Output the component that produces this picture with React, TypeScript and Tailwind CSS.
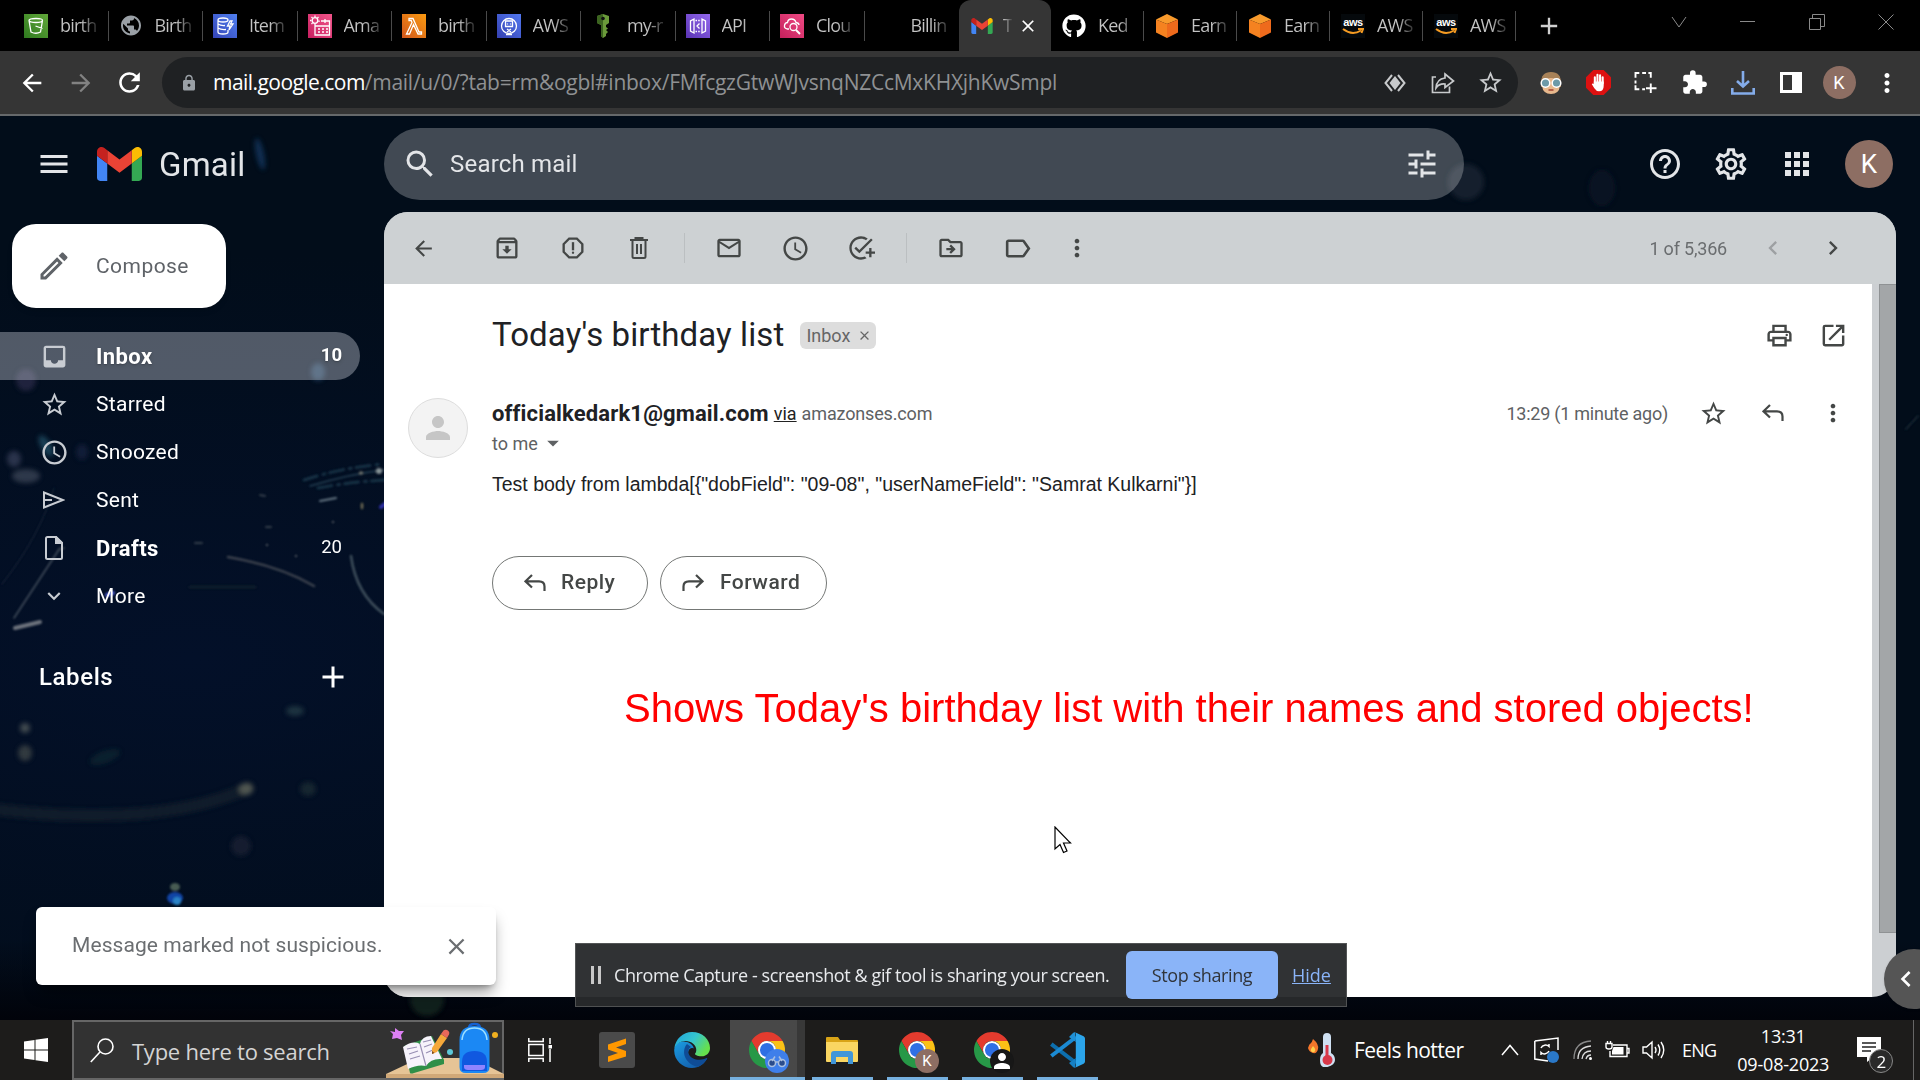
import React from "react";
import {
  MdMenu, MdSearch, MdTune, MdHelpOutline, MdOutlineSettings, MdApps, MdArrowBack, MdArrowForward, MdOutlineArchive,
  MdOutlineReport, MdMailOutline, MdSchedule, MdAddTask, MdOutlineDriveFileMove, MdLabelOutline,
  MdMoreVert, MdChevronLeft, MdChevronRight, MdOutlinePrint, MdOpenInNew, MdStarBorder, MdOutlineEdit, MdInbox,
  MdExpandMore, MdAdd, MdClose, MdPerson, MdExtension, MdLock, MdRefresh, MdPublic, MdArrowDropDown,
} from "react-icons/md";
import { FaGithub } from "react-icons/fa";

type Kids = { children?: React.ReactNode };

/* ---------- logos ---------- */

const GmailLogo = ({ className }: { className: string }) => (
  <svg viewBox="52 42 88 66" className={className}>
    <path fill="#4285f4" d="M58 108h14V74L52 59v43c0 3.32 2.69 6 6 6" />
    <path fill="#34a853" d="M120 108h14c3.32 0 6-2.69 6-6V59l-20 15" />
    <path fill="#fbbc04" d="M120 48v26l20-15v-8c0-7.42-8.47-11.65-14.4-7.2" />
    <path fill="#ea4335" d="M72 74V48l24 18 24-18v26L96 92" />
    <path fill="#c5221f" d="M52 51v8l20 15V48l-5.6-4.2c-5.94-4.45-14.4-.22-14.4 7.2" />
  </svg>
);

const ChromeLogo = () => (
  <svg viewBox="2 2 44 44" className="size-9">
    <path fill="#e33b2e" d="M4.95 13A22 22 0 0 1 43.05 13H24A11 11 0 0 0 14.47 29.5Z" />
    <path fill="#fbc116" d="M24 13H43.05A22 22 0 0 1 24 46L33.53 29.5A11 11 0 0 0 24 13Z" />
    <path fill="#279847" d="M24 46A22 22 0 0 1 4.95 13L14.47 29.5A11 11 0 0 0 33.53 29.5Z" />
    <circle cx="24" cy="24" r="11" fill="#fff" />
    <circle cx="24" cy="24" r="8.6" fill="#2f6fe4" />
  </svg>
);

const EdgeLogo = () => (
  <svg viewBox="0 0 36 36" className="size-9">
    <defs>
      <linearGradient id="eg" x1="0" y1="0" x2="1" y2=".5">
        <stop offset="0" stopColor="#1fa3dc" />
        <stop offset=".55" stopColor="#35c5cf" />
        <stop offset="1" stopColor="#66e04d" />
      </linearGradient>
      <linearGradient id="eb" x1="0" y1="0" x2=".8" y2="1">
        <stop offset="0" stopColor="#1b9de2" />
        <stop offset="1" stopColor="#1258a6" />
      </linearGradient>
    </defs>
    <path fill="url(#eb)" d="M.3 17C1.500 10 8 8.500 13 10C18 11.500 20 15 19.500 16.500C16 14.500 13 19 14.500 23C17 30 27 31 33 26.500C30 32 25 36 18 36C8 36-.8 27 .3 17Z" />
    <path fill="#0f4c96" d="M13 12C10 15 9 21 11.500 26C14 31 19 34 24 34.800C28 33.500 31.500 30 33.300 26.600C33.400 26 33 25.900 32.500 26.100C26 29.500 17 27.500 14.700 22C13.500 19 15 16 17 15Z" />
    <path fill="url(#eg)" d="M.3 16.500C1.300 7 9 0 18 0C28.500 0 36 7.500 36 16C36 21.500 31.500 24.500 27.500 24.300C23 24.200 20.800 22.800 21 21.800C21.200 21.200 22.300 20.600 22.300 18C22.300 13 17.500 9 11.500 9C6.500 9 2 12 .3 16.500Z" />
  </svg>
);

const VsCodeLogo = () => (
  <svg viewBox="0 0 36 36" className="size-9">
    <path fill="none" stroke="#0d6fae" strokeWidth="4" strokeLinejoin="round" d="M2.300 12.200L27 31" />
    <path fill="none" stroke="#1b8ad3" strokeWidth="4" strokeLinejoin="round" d="M2.300 24L27 5" />
    <path fill="#2ba4ea" d="M26 .3L34.600 4.200Q36 5 36 6.400V29.600Q36 31 34.600 31.800L26 35.800Q26.800 35 26.800 33.500V2.500Q26.800 1 26 .3Z" />
    <path fill="#1f90d6" d="M26 .3Q25 0 24 1L20 5L26.800 10Z" />
    <path fill="#1580c4" d="M26 35.800Q25 36 24 35L20 31L26.800 26Z" />
  </svg>
);

const AwsTile = ({ from, to, children }: { from: string; to: string } & Kids) => (
  <svg viewBox="0 0 24 24" className="size-6" fill="none" stroke="#fff" strokeWidth="1.3">
    <defs>
      <linearGradient id={"g" + from.slice(1)} x1="0" y1="1" x2="1" y2="0">
        <stop offset="0" stopColor={from} />
        <stop offset="1" stopColor={to} />
      </linearGradient>
    </defs>
    <rect width="24" height="24" fill={`url(#g${from.slice(1)})`} stroke="none" />
    {children}
  </svg>
);

const OrangeCube = () => (
  <svg viewBox="0 0 24 24" className="size-6">
    <path fill="#f89a2c" d="M12 0L23 5.500L12 10L1 5.500Z" />
    <path fill="#f58220" d="M1 5.500L12 10V24L1 18.500Z" />
    <path fill="#ee6a1c" d="M23 5.500L12 10V24L23 18.500Z" />
  </svg>
);

const AwsSmile = () => (
  <span className="flex size-6 flex-col items-center bg-[#05090c] pt-0.5 font-['Liberation_Sans',sans-serif] text-[11px] leading-[12px] font-bold tracking-[-0.5px] text-white">
    aws
    <svg viewBox="0 0 22 8" className="h-2 w-[22px]" fill="none" stroke="#f59b22" strokeWidth="2">
      <path d="M1 1Q10 8 19 2.500M16 1H21L19.500 5" />
    </svg>
  </span>
);

/* ---------- browser tabs ---------- */

const tabs: { label: string; icon: React.ReactNode }[] = [
  {
    label: "birth",
    icon: (
      <AwsTile from="#2f7a1f" to="#62a83a">
        <path d="M5 6.500L7 18Q12 20.500 16.500 18L18.500 6.500M5 6.500Q5 4.500 12 4.500T18.500 6.500T12 8.500T5 6.500M11.500 12L18.500 14.500" />
      </AwsTile>
    ),
  },
  { label: "Birth", icon: <MdPublic className="size-[25px] text-[#9aa0a6]" /> },
  {
    label: "Item",
    icon: (
      <AwsTile from="#3444b8" to="#5080f0">
        <path d="M5 6Q5 4 10 4T15 6T10 8T5 6V18Q5 20 10 20T15 18V16M5 10Q8 12 12 11.500M5 14Q8 16 13 15.500M17 7L14.500 12H17L16 16L20 10H17.500L19 7Z" />
      </AwsTile>
    ),
  },
  {
    label: "Ama",
    icon: (
      <AwsTile from="#c71f60" to="#f2558a">
        <path d="M7 10V21H21.500V7H13M7 12H21M11 6.500V8M17 5V9M10 15H12M14 15H16M18 15H20M10 18H12M14 18H16M18 18H20" />
        <circle cx="7" cy="6.500" r="2.800" />
        <path d="M7 1.500V3M2 6.500H3.500M3.500 3L4.500 4M10.500 3L9.500 4M3.500 10L4.500 9" />
      </AwsTile>
    ),
  },
  {
    label: "birth",
    icon: (
      <AwsTile from="#d0561c" to="#fa9a10">
        <path d="M7 4.500H11L17 18H19.500V20H16L11.500 10.500L7.500 20H4.500L10 8.500L9.200 6.500H7Z" />
      </AwsTile>
    ),
  },
  {
    label: "AWS",
    icon: (
      <AwsTile from="#3440b0" to="#5278f0">
        <circle cx="12" cy="12" r="7.500" />
        <path d="M8.500 7H15.500V12.500H8.500ZM10 15L14 18M14 15L10 18M10.500 9.500V10.500M13.500 9.500V10.500M9 20.500H15" />
      </AwsTile>
    ),
  },
  {
    label: "my-r",
    icon: (
      <svg viewBox="0 0 24 24" className="size-6">
        <path fill="#6a9a3a" d="M6 2L12 0L18 2V9L15 11V13L17 14.500L15 16L17 18L15 20V22L12 24L10 22V11L6 9Z" />
        <path fill="#3c6420" d="M6 2L12 0V24L10 22V11L6 9Z" />
        <circle cx="12" cy="4.500" r="1.800" fill="#111" />
      </svg>
    ),
  },
  {
    label: "API",
    icon: (
      <AwsTile from="#5a34b4" to="#9468ee">
        <path d="M8 5L4.500 7V17L8 19ZM16 5L19.500 7V17L16 19ZM13.500 9.500L11 12L13.500 14.500" />
        <path d="M9.500 6.500H15M9.500 17.500H15" strokeDasharray="1.500 1.200" />
      </AwsTile>
    ),
  },
  {
    label: "Clou",
    icon: (
      <AwsTile from="#c4205c" to="#f04a84">
        <path d="M9 15H7.500Q4 14.500 4.500 11.500T7.500 8.500Q8 5 11.500 5T16 8.500Q19 9 19 11" />
        <circle cx="13.500" cy="13" r="3.500" />
        <path d="M16 16L20 20" strokeWidth="2" />
      </AwsTile>
    ),
  },
  { label: "Billin", icon: null },
];

const tabsAfter: { label: string; icon: React.ReactNode }[] = [
  { label: "Ked", icon: <FaGithub className="size-6 text-white" /> },
  { label: "Earn", icon: <OrangeCube /> },
  { label: "Earn", icon: <OrangeCube /> },
  { label: "AWS", icon: <AwsSmile /> },
  { label: "AWS", icon: <AwsSmile /> },
];

const TabBody = ({ label, icon }: { label: string; icon: React.ReactNode }) => (
  <>
    <span className="flex size-6 shrink-0 items-center justify-center">{icon}</span>
    <span className="ml-3 w-[38px] bg-linear-to-r from-[#c4c4c4] from-55% to-[#222] bg-clip-text text-[18px] tracking-[-0.8px] whitespace-nowrap text-transparent">
      {label}
    </span>
  </>
);

const Cell = ({ children, className }: Kids & { className: string }) => (
  <span className={"flex shrink-0 items-center justify-center " + className}>{children}</span>
);

const TabStrip = () => (
  <div className="flex h-[51px] bg-black pl-[14px]">
    {tabs.map((t, i) => (
      <div key={i} className="flex h-[51px] w-[94.500px] items-center pl-[10px]">
        <TabBody {...t} />
        {i < 9 && <span className="ml-auto h-[30px] w-px bg-[#4a4a4a]" />}
      </div>
    ))}
    <div className="relative flex h-[51px] w-[92px] items-center rounded-t-xl bg-[#353535] pl-3">
      <span className="absolute bottom-0 -left-2 size-2 bg-radial-[at_0_0] from-black from-95% to-[#353535] to-100%" />
      <span className="absolute -right-2 bottom-0 size-2 bg-radial-[at_100%_0] from-black from-95% to-[#353535] to-100%" />
      <GmailLogo className="h-4 w-[22px]" />
      <span className="ml-[10px] w-[9px] bg-linear-to-r from-[#ccc] to-[#444] bg-clip-text text-[18px] tracking-[-1px] text-transparent">T</span>
      <MdClose className="ml-[6px] size-5 text-white" />
    </div>
    {tabsAfter.map((t, i) => (
      <div key={i} className="flex h-[51px] w-[93px] items-center pl-[11px]">
        <TabBody {...t} />
        <span className="ml-auto h-[30px] w-px bg-[#4a4a4a]" />
      </div>
    ))}
    <Cell className="ml-[15px] w-[36px]"><MdAdd className="size-7 text-[#d0d0d0]" /></Cell>
    <div className="ml-auto flex h-[43px] w-[275px] items-center">
      <Cell className="w-[68px]"><svg viewBox="0 0 16 12" className="h-3 w-4" fill="none" stroke="#8a8a8a"><path d="M1 1L8 11L15 1" /></svg></Cell>
      <Cell className="w-[69px]"><span className="h-px w-[15px] bg-[#8a8a8a]" /></Cell>
      <Cell className="w-[69px]"><svg viewBox="0 0 16 16" className="size-4" fill="none" stroke="#8a8a8a"><path d="M.5 4.500H11.500V15.500H.5ZM3.500 4V.5H15.500V12.500H12" /></svg></Cell>
      <Cell className="w-[69px]"><svg viewBox="0 0 16 16" className="size-4" fill="none" stroke="#8a8a8a"><path d="M.5.5L15.500 15.500M15.500.5L.5 15.500" /></svg></Cell>
    </div>
  </div>
);

const AddressBar = () => (
  <div className="flex h-[65px] items-center border-b-2 border-[#66696b] bg-[#353535] text-white">
    <Cell className="ml-[8px] w-12"><MdArrowBack className="size-7" /></Cell>
    <Cell className="w-[49px]"><MdArrowForward className="size-7 text-[#828282]" /></Cell>
    <Cell className="w-12"><MdRefresh className="size-[31px]" /></Cell>
    <div className="ml-[9px] flex h-[51px] w-[1356px] items-center rounded-full bg-[#1f2123] pl-[18px]">
      <MdLock className="size-[18px] text-[#9aa0a6]" />
      <span className="ml-[15px] text-[21px] tracking-[-0.26px] whitespace-nowrap text-[#8f9193]">
        <span className="tracking-[-0.55px] text-white">mail.google.com</span>/mail/u/0/?tab=rm&amp;ogbl#inbox/FMfcgzGtwWJvsnqNZCcMxKHXjhKwSmpl
      </span>
      <Cell className="ml-auto w-12">
        <svg viewBox="0 0 22 18" className="h-[18px] w-[22px]" fill="none" stroke="#c8cacc" strokeWidth="2">
          <path d="M8 1L1.500 9L8 17M14 1L20.500 9L14 17" />
          <path d="M11 2L16.500 9L11 16L5.500 9Z" fill="#c8cacc" stroke="none" />
        </svg>
      </Cell>
      <Cell className="w-12">
        <svg viewBox="0 0 24 22" className="h-[22px] w-6" fill="none" stroke="#c8cacc" strokeWidth="1.700">
          <path d="M5 5H1.500V20.500H18.500V14.500M14 2L22.500 9L14 15.500V12Q8 11.500 5 16Q5.500 7 14 6Z" />
        </svg>
      </Cell>
      <Cell className="mr-[4px] w-[47px]"><MdStarBorder className="size-[27px] text-[#c8cacc]" /></Cell>
    </div>
    <div className="ml-[9px] flex">
      <Cell className="w-12">
        <svg viewBox="0 0 24 24" className="size-6">
          <path fill="#a88258" d="M2 12Q2 1 12 1T22 12V16H2Z" />
          <path fill="#e8b88c" d="M3 11Q12 3 21 11V15Q20 23 12 23T3 15Z" />
          <circle cx="6.500" cy="12" r="4.300" fill="#6d9aa8" stroke="#fff" strokeWidth="1.500" />
          <circle cx="17.500" cy="12" r="4.300" fill="#6d9aa8" stroke="#fff" strokeWidth="1.500" />
          <path d="M9.500 19H14.500" stroke="#a04030" strokeWidth="1.500" />
        </svg>
      </Cell>
      <Cell className="w-[47px]">
        <svg viewBox="0 0 24 24" className="size-[25px]">
          <path fill="#dd1111" d="M7 0H17L24 7V17L17 24H7L0 17V7Z" />
          <path stroke="#fff" strokeWidth="2" strokeLinecap="round" d="M8.500 14V7M11 12V4.500M13.500 12V5M16 13V7" />
          <path fill="#fff" d="M7.500 11H17V15Q17 20.500 12.500 20.500Q10 20.500 8 17.500L5.500 13.500Q6.500 12.500 7.500 13.500Z" />
        </svg>
      </Cell>
      <Cell className="w-12">
        <svg viewBox="0 0 24 22" className="h-[21px] w-6" fill="none" stroke="#fff" strokeWidth="2">
          <path d="M1 6V1H5M8 1H12M14.500 1H17V6M1 9V12M1 14V18H5M8 18H11M17 12V22M12 17H23" />
        </svg>
      </Cell>
      <Cell className="w-[49px]"><MdExtension className="size-[27px]" /></Cell>
      <Cell className="w-12">
        <svg viewBox="0 0 24 24" className="size-6" fill="none" stroke="#84acea" strokeWidth="2.600">
          <path d="M12 0V15M6 10L12 15.500L18 10M1.300 17V22.500H22.700V17" />
        </svg>
      </Cell>
      <Cell className="w-12">
        <span className="flex h-[21px] w-[22px] border-[3px] border-white"><span className="ml-auto w-[7px] bg-white" /></span>
      </Cell>
      <Cell className="w-12"><span className="flex size-[33px] items-center justify-center rounded-full bg-[#8d6e63] font-[Roboto,sans-serif] text-[18px]">K</span></Cell>
      <Cell className="w-12"><MdMoreVert className="size-[30px]" /></Cell>
    </div>
  </div>
);

/* ---------- wallpaper ---------- */

const Wallpaper = () => (
  <svg viewBox="0 0 1920 904" className="absolute inset-0 h-[904px] w-[1920px]" fill="none" strokeLinecap="round">
    <defs>
      <filter id="b1"><feGaussianBlur stdDeviation="1" /></filter>
      <filter id="b3" x="-50%" y="-50%" width="200%" height="200%"><feGaussianBlur stdDeviation="2.500" /></filter>
      <radialGradient id="wg" cx="10%" cy="60%" r="45%">
        <stop offset="0" stopColor="#031029" />
        <stop offset="1" stopColor="#020d1a" />
      </radialGradient>
      <linearGradient id="wb" x1="0" y1="0" x2="0" y2="1">
        <stop offset="0" stopColor="#01040c" stopOpacity="0" />
        <stop offset="1" stopColor="#01030a" />
      </linearGradient>
    </defs>
    <rect width="1920" height="904" fill="url(#wg)" />
    <rect y="824" width="1920" height="80" fill="url(#wb)" />
    <g filter="url(#b3)" opacity=".75">
      <ellipse cx="260" cy="38" rx="4" ry="16" fill="#123a66" transform="rotate(-12 260 38)" />
      <ellipse cx="26" cy="264" rx="10" ry="11" fill="#2c2a48" />
      <ellipse cx="318" cy="256" rx="7" ry="9" fill="#28486a" />
      <ellipse cx="14" cy="343" rx="7" ry="8" fill="#39405a" />
      <ellipse cx="46" cy="330" rx="5" ry="12" fill="#24536a" transform="rotate(-30 46 330)" />
      <ellipse cx="82" cy="336" rx="6" ry="8" fill="#17233f" />
      <ellipse cx="26" cy="360" rx="14" ry="7" fill="#3c4658" />
      <ellipse cx="25" cy="612" rx="5" ry="5" fill="#5a6260" />
      <ellipse cx="25" cy="637" rx="7" ry="8" fill="#424848" />
      <ellipse cx="295" cy="595" rx="9" ry="5" fill="#284048" />
      <ellipse cx="241" cy="730" rx="10" ry="10" fill="#1c2434" />
      <ellipse cx="308" cy="673" rx="8" ry="7" fill="#1e2e36" />
      <ellipse cx="105" cy="641" rx="16" ry="6" fill="#0e2830" transform="rotate(-20 105 641)" />
      <path d="M0 694Q160 712 248 672" stroke="#16242e" strokeWidth="12" />
      <ellipse cx="246" cy="673" rx="7" ry="6" fill="#6a6e60" />
      <ellipse cx="1466" cy="66" rx="18" ry="18" fill="#1c2636" />
      <ellipse cx="1602" cy="72" rx="13" ry="18" fill="#0c1628" />
      <ellipse cx="427" cy="884" rx="17" ry="16" fill="#182a22" />
    </g>
    <g filter="url(#b1)" opacity=".8">
      <path d="M14 502L60 432" stroke="#56606c" strokeWidth="1.500" />
      <path d="M2 468Q40 420 54 372" stroke="#162438" strokeWidth="1.300" />
      <path d="M15 512L40 506" stroke="#8a8e94" strokeWidth="4" />
      <path d="M228 441Q280 450 314 470" stroke="#4c5058" strokeWidth="2.500" />
      <path d="M351 440Q356 478 384 498" stroke="#50606a" strokeWidth="2.500" />
      <path d="M190 471H255" stroke="#12202f" strokeWidth="3" />
      <path d="M304 364Q340 352 383 348M318 372Q350 366 384 364" stroke="#1d3a4e" strokeWidth="3" strokeDasharray="14 6 2 5" />
      <path d="M310 370Q350 358 384 354" stroke="#2c4c60" strokeWidth="1.500" />
      <path d="M320 385L336 382" stroke="#8294a0" strokeWidth="2" />
      <circle cx="379" cy="355" r="3" fill="#a8b4b4" />
      <circle cx="361" cy="357" r="1.800" fill="#9a9a8a" />
      <path d="M362 388V392" stroke="#8a8260" strokeWidth="2.500" />
      <path d="M381 391L386 387" stroke="#3a38c8" strokeWidth="4" />
      <path d="M107 479L113 477" stroke="#5a6af0" strokeWidth="4" />
      <path d="M260 379L265 380M266 411H271M195 427H202M58 434L64 432" stroke="#404a54" strokeWidth="2" />
      <circle cx="333" cy="406" r="1" fill="#888" /><circle cx="267" cy="429" r="1" fill="#888" /><circle cx="296" cy="440" r="1" fill="#888" />
      <ellipse cx="175" cy="771" rx="5" ry="4" fill="#5a7060" />
      <ellipse cx="175" cy="782" rx="8" ry="6" fill="#1552c8" />
      <ellipse cx="177" cy="785" rx="4" ry="4" fill="#35a0f0" />
      <path d="M1906 313L1918 300" stroke="#1a2c36" strokeWidth="2" />
    </g>
  </svg>
);

/* ---------- gmail ---------- */

const GmailHeader = () => (
  <div className="relative flex h-[96px] items-center text-[#e3e5e8]">
    <div className="flex w-[384px] items-center pl-[36px]">
      <MdMenu className="size-9" />
      <GmailLogo className="ml-[25px] h-[34px] w-[45px]" />
      <span className="mt-px ml-[17px] text-[33px] tracking-[0.2px]">Gmail</span>
    </div>
    <div className="flex h-[72px] w-[1080px] items-center rounded-full bg-white/25 pr-[24px] pl-[18px]">
      <MdSearch className="size-9" />
      <span className="ml-[12px] text-[24px] tracking-[0.2px]">Search mail</span>
      <MdTune className="ml-auto size-9" />
    </div>
    <div className="ml-[168px] flex items-center">
      <Cell className="w-[66px]"><MdHelpOutline className="size-9" /></Cell>
      <Cell className="w-[66px]"><MdOutlineSettings className="size-[38px]" /></Cell>
      <Cell className="w-[66px]"><MdApps className="size-9" /></Cell>
      <span className="ml-[15px] flex size-12 items-center justify-center rounded-full bg-[#8d6e63] text-[26px] text-white">K</span>
    </div>
  </div>
);

const navItems = [
  { label: "Inbox", count: "10", bold: true, active: true, icon: <MdInbox className="size-[29px]" /> },
  { label: "Starred", icon: <MdStarBorder className="size-[29px]" /> },
  { label: "Snoozed", icon: <MdSchedule className="size-[29px]" /> },
  {
    label: "Sent",
    icon: (
      <svg viewBox="0 0 22 18" className="h-[18px] w-[22px]" fill="none" stroke="currentColor" strokeWidth="2">
        <path d="M1 1.500L20 9L1 16.500ZM1 9H9" />
      </svg>
    ),
  },
  {
    label: "Drafts", count: "20", bold: true,
    icon: (
      <svg viewBox="0 0 18 24" className="h-6 w-[18px]" fill="none" stroke="currentColor" strokeWidth="2">
        <path d="M1 2.500Q1 1 2.500 1H11L17 7V21.500Q17 23 15.500 23H2.500Q1 23 1 21.500Z" />
        <path d="M11 1V7H17Z" fill="currentColor" />
      </svg>
    ),
  },
  { label: "More", icon: <MdExpandMore className="size-[26px]" /> },
];

const Sidebar = () => (
  <div className="relative w-[384px] pt-3 text-white">
    <div className="ml-3 flex h-[84px] w-[214px] items-center rounded-3xl bg-white pl-[24px] text-[#5f6368] shadow-md">
      <MdOutlineEdit className="size-9" />
      <span className="mt-px ml-[24px] text-[21px] tracking-[0.45px]">Compose</span>
    </div>
    <div className="mt-6">
      {navItems.map((n) => (
        <div key={n.label} className={"flex h-12 w-[360px] items-center pr-[18px] pl-[36px] text-[21px] " + (n.active ? "rounded-r-full bg-[#c8ccd8]/40 text-shadow-md" : "")}>
          <Cell className="w-9 text-[#c8ccd2]">{n.icon}</Cell>
          <span className={"mt-px ml-[24px] " + (n.bold ? "text-[22px] font-bold tracking-[0.4px]" : "tracking-[0.3px]")}>{n.label}</span>
          <span className={"ml-auto text-[18.500px] " + (n.active ? "font-bold" : "")}>{n.count}</span>
        </div>
      ))}
    </div>
    <div className="mt-[33px] flex h-12 w-[351px] items-center justify-between pl-[39px] text-[24px] font-medium tracking-[0.6px]">
      Labels
      <MdAdd className="size-9 font-normal" />
    </div>
  </div>
);

const TrashIcon = () => (
  <svg viewBox="0 0 20 22" className="h-[22px] w-5" fill="none" stroke="currentColor" strokeWidth="2">
    <path d="M1 3H19M6.500 2V1H13.500V2M3.500 3V19.500Q3.500 21 5 21H15Q16.500 21 16.500 19.500V3M8 7V17M12 7V17" />
  </svg>
);

const MailToolbar = () => (
  <div className="flex h-[72px] items-center bg-[#cdd1d3] text-[#444746]">
    <Cell className="ml-[15px] w-12"><MdArrowBack className="size-[25px]" /></Cell>
    <Cell className="ml-[27px] w-[66px]"><MdOutlineArchive className="size-7" /></Cell>
    <Cell className="w-[66px]"><MdOutlineReport className="size-7" /></Cell>
    <Cell className="w-[66px]"><TrashIcon /></Cell>
    <Cell className="w-[24px]"><span className="h-[30px] w-px bg-[#bbbfc1]" /></Cell>
    <Cell className="w-[66px]"><MdMailOutline className="size-7" /></Cell>
    <Cell className="w-[66px]"><MdSchedule className="size-[29px]" /></Cell>
    <Cell className="w-[66px]"><MdAddTask className="size-7" /></Cell>
    <Cell className="w-[24px]"><span className="h-[30px] w-px bg-[#bbbfc1]" /></Cell>
    <Cell className="w-[66px]"><MdOutlineDriveFileMove className="size-7" /></Cell>
    <Cell className="w-[66px]"><MdLabelOutline className="size-[31px]" /></Cell>
    <Cell className="w-[54px]"><MdMoreVert className="size-7" /></Cell>
    <span className="mr-[16px] ml-auto text-[18px] tracking-[-0.2px] whitespace-nowrap text-[#6a6d6f]">1 of 5,366</span>
    <Cell className="w-[60px] text-[#9da0a2]"><MdChevronLeft className="size-7" /></Cell>
    <Cell className="mr-[33px] w-[60px]"><MdChevronRight className="size-7" /></Cell>
  </div>
);

const ReplyArrow = ({ flip }: { flip?: boolean }) => (
  <svg viewBox="0 0 22 18" className={"h-[18px] w-[22px] " + (flip ? "-scale-x-100" : "")} fill="none" stroke="#444746" strokeWidth="2.200">
    <path d="M8 1L1.500 7.300L8 13.500M1.500 7.300H15Q20.500 7.300 20.500 12.500V17" />
  </svg>
);

const Message = () => (
  <div className="h-[713px] w-[1488px] bg-white text-[#202124]">
    <div className="flex h-[102px] items-center pl-[108px]">
      <span className="text-[33px] tracking-[0.1px] whitespace-nowrap">Today's birthday list</span>
      <span className="ml-[16px] flex h-[27px] w-[76px] items-center rounded-md bg-[#dddddd] pl-[6px] text-[18px] text-[#666]">
        Inbox
        <MdClose className="ml-[7px] size-[15px]" />
      </span>
      <Cell className="mr-[12px] ml-auto w-[42px]"><MdOutlinePrint className="size-[29px] text-[#444746]" /></Cell>
      <Cell className="mr-[18px] w-[42px]"><MdOpenInNew className="size-[29px] text-[#444746]" /></Cell>
    </div>
    <div className="flex pt-3">
      <span className="ml-6 flex size-[60px] items-center justify-center rounded-full border border-[#ddd] bg-[#f3f3f3]">
        <MdPerson className="size-9 text-[#c6c6c6]" />
      </span>
      <div className="ml-6 flex-1">
        <div className="flex h-[30px] items-center text-[18px] whitespace-nowrap text-[#5e6163]">
          <span className="text-[22px] font-bold tracking-[0.15px] text-[#202124]">officialkedark1@gmail.com</span>
          <span className="ml-[5px] text-[#222] underline">via</span>
          <span className="ml-[5px] tracking-[-0.15px]">amazonses.com</span>
          <span className="mr-[15px] ml-auto tracking-[-0.24px]">13:29 (1 minute ago)</span>
          <Cell className="w-[60px]"><MdStarBorder className="size-[29px] text-[#444746]" /></Cell>
          <Cell className="w-[60px]"><ReplyArrow /></Cell>
          <Cell className="mr-[9px] w-[60px]"><MdMoreVert className="size-7 text-[#444746]" /></Cell>
        </div>
        <div className="flex h-[30px] items-center text-[18px] text-[#5e6163]">
          to me
          <MdArrowDropDown className="ml-px size-7" />
        </div>
        <div className="mt-[11px] h-[30px] font-['Liberation_Sans',sans-serif] text-[19.500px] leading-[30px] whitespace-nowrap">
          {'Test body from lambda[{"dobField": "09-08", "userNameField": "Samrat Kulkarni"}]'}
        </div>
        <div className="mt-[57px] flex gap-3 text-[21px] font-medium tracking-[0.5px] text-[#444746]">
          <span className="flex h-[54px] w-[156px] items-center rounded-full border border-[#747775] pl-[31px]"><ReplyArrow /><span className="ml-[15px]">Reply</span></span>
          <span className="flex h-[54px] w-[167px] items-center rounded-full border border-[#747775] pl-[21px]"><ReplyArrow flip /><span className="ml-4">Forward</span></span>
        </div>
        <div className="mt-[74px] ml-[132px] font-['Liberation_Sans',sans-serif] text-[40px] leading-[48px] whitespace-nowrap text-[#ff0000]">
          Shows Today's birthday list with their names and stored objects!
        </div>
      </div>
    </div>
  </div>
);

const Gmail = () => (
  <div className="relative h-[904px] overflow-hidden font-[Roboto,sans-serif]">
    <Wallpaper />
    <GmailHeader />
    <div className="flex">
      <Sidebar />
      <div className="relative h-[785px] w-[1512px] overflow-hidden rounded-3xl bg-[#cccfd2]">
        <MailToolbar />
        <div className="flex justify-between">
          <Message />
          <span className="h-[649px] w-[17px] border-y border-l border-[#8f9294] bg-[#a3a6a8]" />
        </div>
      </div>
    </div>
    <div className="absolute top-[791px] left-[36px] flex h-[78px] w-[460px] items-center justify-between rounded-md bg-white pr-[26px] pl-[36px] text-[21px] tracking-[0.08px] text-[#6b6e71] shadow-lg shadow-black/40">
      Message marked not suspicious.
      <MdClose className="size-[27px]" />
    </div>
    <span className="absolute top-[833px] left-[1884px] flex size-[60px] items-center rounded-full bg-[#555] pl-[6px] text-white shadow">
      <MdChevronLeft className="size-8" />
    </span>
  </div>
);

const SharingBar = () => (
  <div className="absolute top-[943px] left-[575px] flex h-[64px] w-[772px] items-center border border-[#6a6c6e]/60 bg-[#282a2c]/96 pl-[15px] text-[18px] whitespace-nowrap text-[#e8eaed]">
    <span className="h-[18px] w-[10px] border-x-[3px] border-[#c8c8c8]" />
    <span className="ml-[13px] w-[512px] tracking-[-0.4px]">Chrome Capture - screenshot &amp; gif tool is sharing your screen.</span>
    <span className="flex h-12 w-[152px] items-center justify-center rounded-md bg-[#8ab4f8] font-medium tracking-[-0.4px] text-[#30343a]">Stop sharing</span>
    <span className="ml-[14px] text-[#8ab4f8] underline">Hide</span>
  </div>
);

/* ---------- taskbar ---------- */

const SearchArt = () => (
  <svg viewBox="0 0 118 56" className="h-[56px] w-[118px]">
    <path fill="#e6c496" d="M0 52L34 36H86L118 52V56H0Z" />
    <path fill="#d0a878" d="M0 52H118V56H0Z" />
    <path fill="#dd80f4" d="M9 6L13 9L18 9L15 13L16 18L11 16L6 17L7 12L4 9L9 10Z" />
    <path fill="#2f8f48" d="M18 24L24 51Q25 52 28 51L58 42V38L46 14Z" />
    <path fill="#f6f3fb" d="M17 25Q27 18 34 22Q36 14 45 14L56 37Q45 36 40 44Q32 42 22 47Z" />
    <path stroke="#9890b4" strokeWidth="1.200" fill="none" d="M34 22L40 44M21 27L31 25M23 32L32 29M24 37L34 34M37 20L45 18M38 25L46 22M40 31L49 27" />
    <path fill="#f5a83a" d="M46 26L55 12L61 16L51 30L46 32Z" />
    <path fill="#7a4a20" d="M46 29V32L48.500 31Z" />
    <path fill="#e9685a" d="M55 12L57.500 8.500Q60 7 62.500 9Q64 10.500 63 12.500L61 16Z" />
    <circle cx="64" cy="30" r="3" fill="#5cc8d8" />
    <circle cx="109" cy="13" r="3" fill="#f0b020" />
    <path fill="none" stroke="#1560d0" strokeWidth="2.500" d="M83 6Q83 2 88.500 2T94 6" />
    <path fill="#1b88f4" d="M73.500 18Q73.500 4 88.500 4T103.500 18V45Q103.500 51 97 51H80Q73.500 51 73.500 45Z" />
    <path fill="none" stroke="#9fe0ff" strokeWidth="1.500" d="M76 18Q77 6 88.500 6T101 18" />
    <path fill="#1058e0" d="M76 40Q76 29 88.500 29T101 40V49H76Z" />
    <path fill="#8f84ff" d="M78 43H99V45Q99 48 95 48H82Q78 48 78 45Z" />
  </svg>
);

const AppSlot = ({ children, badge, active, plain }: Kids & { badge?: React.ReactNode; active?: boolean; plain?: boolean }) => (
  <div className={"relative flex h-[60px] w-[75px] items-center justify-center pr-[2px] " + (active ? "bg-linear-to-r from-[#484848] from-90% to-[#383838] to-90%" : "")}>
    {children}
    {badge && <span className="absolute top-[29px] left-[35px]">{badge}</span>}
    {!plain && <span className={"absolute bottom-0 h-[3px] bg-[#76b0df] " + (active ? "inset-x-0" : "inset-x-[7px]")} />}
  </div>
);

const Taskbar = () => (
  <div className="flex h-[60px] items-center bg-[#1d1c1b] text-white">
    <Cell className="w-[72px]">
      <svg viewBox="0 0 24 24" className="size-6" fill="#fff">
        <path d="M0 3.500L10.500 2V11.500H0ZM11.500 1.800L24 0V11.500H11.500ZM0 12.500H10.500V22L0 20.500ZM11.500 12.500H24V24L11.500 22.200Z" />
      </svg>
    </Cell>
    <div className="flex h-[60px] w-[432px] items-center border-2 border-[#666] bg-[#323232] pl-[16px]">
      <svg viewBox="0 0 24 25" className="h-[25px] w-6" fill="none" stroke="#fff" strokeWidth="1.600">
        <circle cx="15.500" cy="8.500" r="7.500" />
        <path d="M10 14L.8 24" />
      </svg>
      <span className="mt-0.5 ml-[18px] text-[22px] tracking-[-0.25px] text-[#d4d4d4]">Type here to search</span>
      <span className="-mr-0.5 ml-auto"><SearchArt /></span>
    </div>
    <Cell className="w-[72px]">
      <svg viewBox="0 0 24 24" className="size-6" fill="none" stroke="#fff" strokeWidth="1.500">
        <path d="M.8 0V3.500H15.200V0M.8 24V20.500H15.200V24M.8 6.500H15.200V17.500H.8ZM22 0V6M22 11V24" />
        <path d="M20.500 7H24V10.500H20.500Z" fill="#fff" stroke="none" />
      </svg>
    </Cell>
    <div className="ml-[4px] flex">
      <AppSlot plain>
        <svg viewBox="0 0 36 36" className="size-9">
          <rect width="36" height="36" rx="3" fill="#4a4a4a" />
          <path fill="#ff9800" d="M9 12.500L27 6.500V12L17 15.500L27 19V24.500L9 30V24.500L19 21L9 17.500Z" />
        </svg>
      </AppSlot>
      <AppSlot plain><EdgeLogo /></AppSlot>
      <AppSlot
        active
        badge={
          <svg viewBox="0 0 24 24" className="size-6">
            <circle cx="12" cy="12" r="12" fill="#3f7fea" />
            <circle cx="7" cy="14" r="3.500" fill="#2a4c8c" stroke="#a9bfe0" strokeWidth="1.500" /><circle cx="17" cy="14" r="3.500" fill="#2a4c8c" stroke="#a9bfe0" strokeWidth="1.500" />
            <path d="M7 12L10 7.500M14 7.500L17 12M10.500 13H13.500" stroke="#a9bfe0" strokeWidth="1.500" fill="none" />
          </svg>
        }
      >
        <ChromeLogo />
      </AppSlot>
      <AppSlot>
        <svg viewBox="0 0 32 27" className="h-[27px] w-8">
          <path fill="#d9a417" d="M0 1Q0 0 1 0H12L14 3H31Q32 3 32 4V10H0Z" />
          <path fill="#fad662" d="M0 5H32V24Q32 25 31 25H1Q0 25 0 24Z" />
          <path fill="#4196d8" d="M5 27V17Q5 14 8 14H24Q27 14 27 17V27H22V20H10V27Z" />
        </svg>
      </AppSlot>
      <AppSlot badge={<span className="flex size-6 items-center justify-center rounded-full bg-[#8d6e63] font-[Roboto,sans-serif] text-[15px]">K</span>}><ChromeLogo /></AppSlot>
      <AppSlot badge={<span className="flex size-6 items-center justify-center rounded-full bg-[#171717]"><MdPerson className="size-6" /></span>}><ChromeLogo /></AppSlot>
      <AppSlot><VsCodeLogo /></AppSlot>
    </div>
    <div className="ml-auto flex h-[60px] w-[612px] items-center">
      <svg viewBox="0 0 28 34" className="h-[34px] w-7">
        <path fill="#f5762a" d="M5 6Q11 11 10 16T5 20T0 15Q1 11 3 10Q4 9 5 6Z" />
        <path fill="#ffd04a" d="M5 13Q8 16 7 18T4 19T3 16Z" />
        <path fill="#cfe0f2" d="M15 4Q15 0 19 0T23 4V20Q27 22 27 27T19.500 34T12 27Q12 22 15 20Z" />
        <path stroke="#d8384a" strokeWidth="3" d="M19 12V26" />
        <circle cx="19.500" cy="27" r="5" fill="#d8384a" />
      </svg>
      <span className="mt-0.5 ml-[18px] w-[132px] text-[21px] tracking-[-0.55px] whitespace-nowrap">Feels hotter</span>
      <Cell className="w-12"><svg viewBox="0 0 18 12" className="h-3 w-[18px]" fill="none" stroke="#fff" strokeWidth="1.500"><path d="M1 11L9 1.500L17 11" /></svg></Cell>
      <svg viewBox="0 0 25 26" className="h-[26px] w-[25px]" fill="none" stroke="#fff" strokeWidth="1.500">
        <path d="M.8 4L24 1V13M.8 4V22L14 24M7 11A5 5 0 0 1 15 9.500V7M15 14A5 5 0 0 1 7 15.500V18" />
        <circle cx="19" cy="20" r="6" fill="#2a78c8" stroke="none" />
      </svg>
      <svg viewBox="0 0 20 20" className="ml-[14px] size-5" fill="none" stroke="#ddd" strokeWidth="1.300">
        <path d="M1 19Q1 2 18 1" stroke="#888" /><path d="M5 19Q5 7 18 6M9 19Q10 11 18 11M13 19Q14 15 18 15" />
        <circle cx="17.500" cy="18.500" r="1.500" fill="#fff" stroke="none" />
      </svg>
      <svg viewBox="0 0 25 18" className="ml-[12px] h-[18px] w-[25px]" fill="none" stroke="#fff" strokeWidth="1.400">
        <path d="M8 4H22V15.500H5V10M22 7.500H24V12H22M1 2.500H7V6Q7 8 4 8T1 6ZM2.500 0V2.500M5.500 0V2.500" />
        <path d="M8.500 6H18.500V13.500H7V10Z" fill="#fff" stroke="none" />
      </svg>
      <svg viewBox="0 0 24 20" className="ml-[12px] h-5 w-6" fill="none" stroke="#fff" strokeWidth="1.400">
        <path d="M1 7H4.500L10 2V18L4.500 13H1ZM13 7Q15 10 13 13M16 4.500Q19.500 10 16 15.500M19 2Q24.500 10 19 18" />
      </svg>
      <span className="ml-[16px] text-[18px] tracking-[-0.8px]">ENG</span>
      <div className="ml-[13px] flex w-[108px] flex-col items-center text-[18px] leading-[28px] tracking-[-0.2px]">
        <span>13:31</span>
        <span>09-08-2023</span>
      </div>
      <div className="relative ml-[20px] h-[26px] w-6">
        <svg viewBox="0 0 24 26" className="h-[26px] w-6"><path fill="#fff" d="M0 0H24V20H16L10 25V20H0Z" /><path stroke="#222" strokeWidth="1.500" d="M5 6H19M5 10H19M5 14H14" /></svg>
        <span className="absolute top-[12px] left-[12px] flex size-6 items-center justify-center rounded-full border border-[#888] bg-[#2a2a2a] text-[17px] leading-none">2</span>
      </div>
      <span className="mr-[6px] ml-auto h-[60px] w-px bg-[#666]" />
    </div>
  </div>
);

export default function App() {
  return (
    <div className="relative h-[1080px] w-[1920px] overflow-hidden bg-black font-['Open_Sans','Noto_Sans',sans-serif]">
      <TabStrip />
      <AddressBar />
      <Gmail />
      <Taskbar />
      <SharingBar />
      <svg viewBox="0 0 18 28" className="absolute top-[826px] left-[1054px] h-7 w-[18px]">
        <path fill="#fff" stroke="#000" strokeWidth="1.200" d="M1 1V23L6 18.500L9.500 26.500L13 25L9.500 17H16.500Z" />
      </svg>
    </div>
  );
}
